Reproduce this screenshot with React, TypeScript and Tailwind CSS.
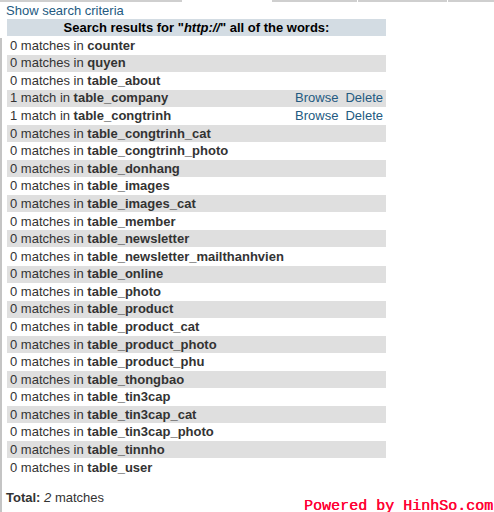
const ROWS: [number, string][] = [
  [0, 'counter'],
  [0, 'quyen'],
  [0, 'table_about'],
  [1, 'table_company'],
  [1, 'table_congtrinh'],
  [0, 'table_congtrinh_cat'],
  [0, 'table_congtrinh_photo'],
  [0, 'table_donhang'],
  [0, 'table_images'],
  [0, 'table_images_cat'],
  [0, 'table_member'],
  [0, 'table_newsletter'],
  [0, 'table_newsletter_mailthanhvien'],
  [0, 'table_online'],
  [0, 'table_photo'],
  [0, 'table_product'],
  [0, 'table_product_cat'],
  [0, 'table_product_photo'],
  [0, 'table_product_phu'],
  [0, 'table_thongbao'],
  [0, 'table_tin3cap'],
  [0, 'table_tin3cap_cat'],
  [0, 'table_tin3cap_photo'],
  [0, 'table_tinnho'],
  [0, 'table_user'],
]

const linkCls = 'text-[#235a81]'

export default function App() {
  return (
    <div className="relative w-[494px] h-[512px] overflow-hidden bg-white text-[13px] text-[#333] font-['Liberation_Sans',Arial,sans-serif]">
      {/* tab strip remnants */}
      <div className="flex h-[2px]">
        <div className="w-[182px] bg-[#cfcfcf]" />
        <div className="w-[90px]" />
        <div className="w-[85px] bg-[#cfcfcf]" />
        <div className="w-[1px]" />
        <div className="w-[89px] bg-[#cfcfcf]" />
        <div className="w-[1px]" />
        <div className="flex-1 bg-[#cfcfcf]" />
      </div>

      <div className="absolute left-0 top-[38px] bottom-0 w-[2px] bg-[#c4c4c4]" />

      <div className="pl-[6px] leading-[15px] mt-[1px]">
        <span className={linkCls}>Show search criteria</span>
      </div>

      <div className="ml-[7px] mt-[1px] w-[379px]">
        <div className="h-[17px] bg-[#d3dce3] flex items-center justify-center font-bold text-black">
          Search results for "<i>http://</i>" all of the words:
        </div>
        <div className="mt-[1px]">
          {ROWS.map(([n, name], i) => (
            <div key={name} className="h-[17.58px] flex items-start">
              <div className={`h-[17px] w-full flex items-center pl-[3px] pr-[3px] ${i % 2 === 1 ? 'bg-[#dfdfdf]' : ''}`}>
                <span className="flex-1">
                  {n} {n === 1 ? 'match' : 'matches'} in <b>{name}</b>
                </span>
                {n > 0 && (
                  <span className="flex gap-[7px]">
                    <span className={linkCls}>Browse</span>
                    <span className={linkCls}>Delete</span>
                  </span>
                )}
              </div>
            </div>
          ))}
        </div>
      </div>

      <div className="pl-[6px] mt-[14px] leading-[15px]">
        <b>Total:</b> <i>2</i> matches
      </div>

      <div className="absolute right-[1px] bottom-[-3px] text-[#ff0033] font-['Liberation_Mono',monospace] text-[15px] leading-[16px] [text-shadow:0.4px_0_0_#ff0033]">
        Powered by HinhSo.com
      </div>
    </div>
  )
}
